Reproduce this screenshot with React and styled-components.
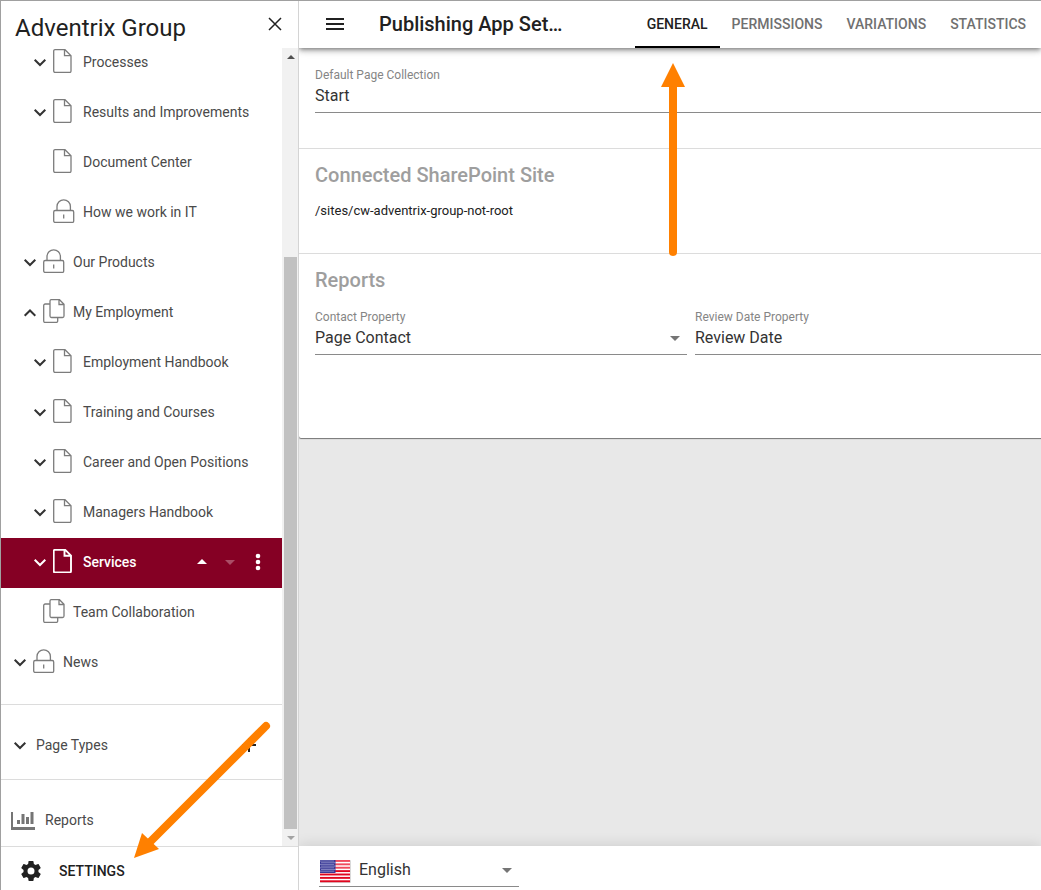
import React from 'react';
import styled, { createGlobalStyle, css } from 'styled-components';

const Global = createGlobalStyle`
  * { box-sizing: border-box; }
  body { margin: 0; font-family: Roboto, "Liberation Sans", sans-serif; color: #212121; background: #fff; }
  button, select { font: inherit; color: inherit; }
  button { border: 0; background: none; padding: 0; cursor: pointer; }
  h1, h2, h3, p, ul { margin: 0; padding: 0; }
  svg { display: block; flex: none; }
`;

const Shell = styled.div`
  position: relative;
  display: flex;
  height: 100vh;
  overflow: hidden;
  border: 1px solid #a0a0a0;
  border-width: 1px 0 0 1px;
`;

const Sidebar = styled.aside`
  display: flex;
  flex: none;
  flex-direction: column;
  width: 298px;
  border-right: 1px solid #d4d4d4;
`;

const SidebarHeader = styled.header`
  display: flex;
  flex: none;
  align-items: center;
  justify-content: space-between;
  height: 47px;
  padding: 0 11px 2px 14px;
`;

const SiteTitle = styled.h1`
  padding-top: 8px;
  font-size: 24px;
  line-height: 32px;
  font-weight: 400;
`;

const IconButton = styled.button`
  display: flex;
  align-items: center;
  justify-content: center;
  width: 24px;
  height: 24px;
  opacity: ${(p) => (p.disabled ? 0.3 : 1)};
`;

const ScrollArea = styled.div`
  display: flex;
  flex: 1;
  min-height: 0;
  overflow: hidden;
`;

const ScrollContent = styled.div`
  flex: 1;
  min-width: 0;
  overflow: hidden;
`;

const Track = styled.div`
  display: flex;
  flex: none;
  flex-direction: column;
  width: 16px;
  padding: 0 1px 0 2px;
  background: #f1f1f1;
`;

const TrackSpace = styled.div`
  flex: none;
  height: 192px;
`;

const Thumb = styled.div`
  flex: 1;
  background: #c1c1c1;
`;

const TrackEnd = styled.div`
  display: flex;
  flex: none;
  align-items: center;
  justify-content: center;
  height: 17px;
`;

const PageTree = styled.ul`
  margin-top: -10px;
  padding-bottom: 16px;
  border-bottom: 1px solid #dcdcdc;
  list-style: none;
`;

const TreeRow = styled.li`
  display: flex;
  align-items: center;
  height: 50px;
  padding: 0 12px 2px ${(p) => p.$level * 10}px;
  color: #4a4a4a;
  ${(p) =>
    p.$active &&
    css`
      background: #850024;
      color: #fff;
    `}
`;

const Expander = styled.button`
  display: flex;
  align-items: center;
  justify-content: center;
  width: 18px;
  height: 24px;
  color: ${(p) => (p.$light ? '#fff' : '#333')};
`;

const ExpanderSpace = styled.span`
  width: 18px;
`;

const PageIcon = styled.span`
  width: 34px;
  padding: 0 0 2px 4px;
  color: ${(p) => (p.$light ? '#fff' : '#7c7c7c')};
`;

const PageLink = styled.a`
  flex: 1;
  font-size: 14px;
  line-height: 20px;
  font-weight: ${(p) => (p.$strong ? 500 : 400)};
  color: inherit;
  text-decoration: none;
  white-space: nowrap;
`;

const RowActions = styled.span`
  display: flex;
  gap: 4px;
`;

const SectionRow = styled.div`
  display: flex;
  align-items: center;
  height: 75px;
  padding: 6px 21px 0 10px;
  border-bottom: 1px solid #dcdcdc;
  color: #4a4a4a;
`;

const SectionIcon = styled.span`
  width: ${(p) => p.$width}px;
  color: ${(p) => p.$color};
`;

const SettingsButton = styled.button`
  display: flex;
  flex: none;
  align-items: center;
  gap: 16px;
  height: 44px;
  padding: 4px 18px 0;
  border-top: 1px solid #dcdcdc;
  font-size: 14px;
  line-height: 20px;
  font-weight: 500;
`;

const Main = styled.main`
  display: flex;
  flex: 1;
  flex-direction: column;
  min-width: 0;
  overflow: hidden;
  background: #e8e8e8;
`;

const Toolbar = styled.header`
  position: relative;
  display: flex;
  flex: none;
  align-items: center;
  height: 47px;
  padding: 0 3px 0 24px;
  background: #fff;
  box-shadow: 0 2px 4px -1px rgba(0, 0, 0, 0.4), 0 4px 5px rgba(0, 0, 0, 0.14), 0 1px 10px rgba(0, 0, 0, 0.12);
`;

const ToolbarStart = styled.div`
  display: flex;
  flex: 1;
  align-items: center;
  gap: 32px;
  min-width: 0;
  padding: 0 16px 2px 0;
`;

const ToolbarTitle = styled.h2`
  font-size: 20px;
  line-height: 28px;
  font-weight: 500;
  white-space: nowrap;
`;

const Tabs = styled.nav`
  display: flex;
  align-self: stretch;
`;

const Tab = styled.button`
  padding: 0 12px;
  border-bottom: 2px solid ${(p) => (p.$active ? '#000' : 'transparent')};
  color: ${(p) => (p.$active ? '#212121' : '#707070')};
  font-size: 14px;
  line-height: 20px;
  font-weight: 500;
`;

const Sheet = styled.div`
  flex: none;
  width: calc(100% + 42px);
  border-radius: 2px;
  background: #fff;
  box-shadow: 0 1px 1px rgba(0, 0, 0, 0.5);
`;

const Section = styled.section`
  padding: ${(p) => p.$pad};
  & + & { border-top: 1px solid #dcdcdc; }
`;

const SectionTitle = styled.h3`
  font-size: 20px;
  line-height: 24px;
  font-weight: 500;
  color: #9e9e9e;
`;

const SitePath = styled.p`
  padding-top: 14px;
  font-size: 13px;
  line-height: 20px;
`;

const FieldRow = styled.div`
  display: grid;
  grid-template-columns: repeat(${(p) => p.$columns}, 1fr);
  gap: 8px;
`;

const ReportFields = styled(FieldRow)`
  padding-top: 17px;
`;

const Field = styled.div`
  display: flex;
  flex-direction: column;
`;

const FieldLabel = styled.label`
  font-size: 12px;
  line-height: 16px;
  color: #858585;
`;

const SelectBox = styled.div`
  position: relative;
  flex: 1;
`;

const Select = styled.select`
  display: block;
  width: 100%;
  height: 30px;
  padding: 0 24px 3px 0;
  border: 0;
  border-bottom: 1px solid #8a8a8a;
  border-radius: 0;
  outline: 0;
  appearance: none;
  background: none;
  font-size: 16px;
  line-height: 24px;
  color: #333;
`;

const SelectArrow = styled.span`
  position: absolute;
  top: 1px;
  right: 0;
  color: #757575;
  pointer-events: none;
`;

const Footer = styled.footer`
  flex: none;
  height: 44px;
  margin-top: auto;
  padding: 11px 20px 0;
  background: #fff;
  box-shadow: 0 -1px 14px rgba(0, 0, 0, 0.12);
`;

const LanguageField = styled.label`
  display: flex;
  align-items: center;
  gap: 8px;
  width: 200px;
  border-bottom: 1px solid #8a8a8a;
`;

const LanguageSelect = styled(Select)`
  height: 29px;
  border-bottom: 0;
`;

const Callout = styled.svg`
  position: absolute;
  top: ${(p) => p.$top}px;
  left: ${(p) => p.$left}px;
  pointer-events: none;
`;

const Chevron = ({ up }) => (
  <svg width="18" height="18" viewBox="0 0 18 18" fill="none" stroke="currentColor" strokeWidth="2">
    <path d={up ? 'M3.7 12.8 9 7.5l5.3 5.3' : 'M3.7 6.7 9 12l5.3-5.3'} />
  </svg>
);

const Triangle = ({ up }) => (
  <svg width="24" height="24" viewBox="0 0 24 24" fill="currentColor">
    <path d={up ? 'M7 14l5-5 5 5z' : 'M7 10l5 5 5-5z'} />
  </svg>
);

const shapes = {
  page: <path d="M2 .7h10l6 6V22a1.500 1.500 0 0 1-1.500 1.500H2A1.500 1.500 0 0 1 .7 22V2A1.300 1.300 0 0 1 2 .7ZM11.500.7v6H18" />,
  pages: (
    <path d="M8 .7h8.500L21 5.200V17a1.500 1.500 0 0 1-1.500 1.500H8.500A1.500 1.500 0 0 1 7 17V2A1.300 1.300 0 0 1 8 .7ZM16 .7v4.800h5M7 5H2.200A1.500 1.500 0 0 0 .7 6.500V22a1.500 1.500 0 0 0 1.500 1.500h11A1.500 1.500 0 0 0 14.700 22v-3.500" />
  ),
  lock: (
    <>
      <rect x=".7" y="11.500" width="20" height="12" rx="1.500" />
      <path d="M4 11.500V7.500a6.700 6.700 0 0 1 13.400 0v4M10.700 15.500v4" />
    </>
  ),
};

const TreeIcon = ({ kind, bold }) => (
  <svg width="22" height="24" viewBox="0 0 22 24" fill="none" stroke="currentColor" strokeWidth={bold ? 1.9 : 1.3}>
    {shapes[kind]}
  </svg>
);

const ChartIcon = () => (
  <svg width="24" height="20" viewBox="0 0 24 20" fill="currentColor">
    <path d="M0 2h2v15h22v3H0zM6 10h3v4H6zM10.500 4h3v10h-3zM15 7h3v7h-3zM19.500 2h3v12h-3z" />
  </svg>
);

const GearIcon = () => (
  <svg width="24" height="24" viewBox="0 0 24 24" fill="currentColor">
    <path d="M12 15.500A3.500 3.500 0 0 1 8.500 12 3.500 3.500 0 0 1 12 8.500a3.500 3.500 0 0 1 3.500 3.500 3.500 3.500 0 0 1-3.500 3.500m7.430-2.530c.04-.32.07-.64.07-.97s-.03-.66-.07-1l2.110-1.630c.19-.15.24-.42.12-.64l-2-3.460c-.12-.22-.39-.31-.61-.22l-2.490 1c-.52-.39-1.060-.73-1.690-.98l-.37-2.650A.506.506 0 0 0 14 2h-4c-.25 0-.46.18-.5.42l-.37 2.650c-.63.25-1.170.59-1.690.98l-2.490-1c-.22-.09-.49 0-.61.22l-2 3.460c-.13.22-.07.49.12.64L4.570 11c-.04.34-.07.67-.07 1s.03.65.07.97l-2.110 1.660c-.19.15-.25.42-.12.64l2 3.460c.12.22.39.3.61.22l2.490-1.010c.52.4 1.060.74 1.690.99l.37 2.650c.04.24.25.42.5.42h4c.25 0 .46-.18.5-.42l.37-2.650c.63-.26 1.170-.59 1.690-.99l2.490 1.010c.22.08.49 0 .61-.22l2-3.460c.12-.22.07-.49-.12-.64z" />
  </svg>
);

const stars = Array.from({ length: 7 }, (_, row) =>
  Array.from({ length: 7 }, (_, col) => [1 + col * 2 + (row % 2), 1 + row * 1.7]),
).flat();

const Flag = () => (
  <svg width="32" height="25" viewBox="0 0 32 25">
    <rect x="1" y="1" width="31" height="23" rx="1" fill="#000" opacity=".15" />
    <rect x="1" y="1" width="30" height="22" fill="#fff" />
    {[0, 1, 2, 3, 4, 5, 6].map((i) => (
      <rect key={i} x="1" y={1 + i * 3.385} width="30" height="1.9" fill={i < 3 ? '#f04a5c' : '#e0061f'} />
    ))}
    <rect x="1" y="1" width="15.500" height="13" fill="#3a3a96" />
    {stars.map(([x, y]) => (
      <rect key={`${x}-${y}`} x={x + 0.5} y={y + 0.5} width="1" height="1" fill="#c4c4e4" />
    ))}
  </svg>
);

const pages = [
  { name: 'Processes', level: 3, icon: 'page', toggle: 'down' },
  { name: 'Results and Improvements', level: 3, icon: 'page', toggle: 'down' },
  { name: 'Document Center', level: 3, icon: 'page' },
  { name: 'How we work in IT', level: 3, icon: 'lock' },
  { name: 'Our Products', level: 2, icon: 'lock', toggle: 'down' },
  { name: 'My Employment', level: 2, icon: 'pages', toggle: 'up' },
  { name: 'Employment Handbook', level: 3, icon: 'page', toggle: 'down' },
  { name: 'Training and Courses', level: 3, icon: 'page', toggle: 'down' },
  { name: 'Career and Open Positions', level: 3, icon: 'page', toggle: 'down' },
  { name: 'Managers Handbook', level: 3, icon: 'page', toggle: 'down' },
  { name: 'Services', level: 3, icon: 'page', toggle: 'down', active: true },
  { name: 'Team Collaboration', level: 2, icon: 'pages' },
  { name: 'News', level: 1, icon: 'lock', toggle: 'down' },
];

const TreeItem = ({ page }) => (
  <TreeRow $level={page.level} $active={page.active}>
    {page.toggle ? (
      <Expander type="button" aria-label={`Toggle ${page.name}`} $light={page.active}>
        <Chevron up={page.toggle === 'up'} />
      </Expander>
    ) : (
      <ExpanderSpace />
    )}
    <PageIcon $light={page.active}>
      <TreeIcon kind={page.icon} bold={page.active} />
    </PageIcon>
    <PageLink href="#" $strong={page.active}>{page.name}</PageLink>
    {page.active && (
      <RowActions>
        <IconButton type="button" aria-label="Move up"><Triangle up /></IconButton>
        <IconButton type="button" aria-label="Move down" disabled><Triangle /></IconButton>
        <IconButton type="button" aria-label="More">
          <svg width="24" height="24" viewBox="0 0 24 24" fill="currentColor">
            <circle cx="12" cy="6" r="2.300" /><circle cx="12" cy="12" r="2.300" /><circle cx="12" cy="18" r="2.300" />
          </svg>
        </IconButton>
      </RowActions>
    )}
  </TreeRow>
);

const SelectField = ({ id, label, value }) => (
  <Field>
    <FieldLabel htmlFor={id}>{label}</FieldLabel>
    <SelectBox>
      <Select id={id} defaultValue={value}><option>{value}</option></Select>
      <SelectArrow><Triangle /></SelectArrow>
    </SelectBox>
  </Field>
);

export default function App() {
  return (
    <>
      <Global />
      <Shell>
        <Sidebar>
          <SidebarHeader>
            <SiteTitle>Adventrix Group</SiteTitle>
            <IconButton type="button" aria-label="Close">
              <svg width="24" height="24" viewBox="0 0 24 24" fill="none" stroke="currentColor" strokeWidth="1.500">
                <path d="M6 6l12 12M18 6 6 18" />
              </svg>
            </IconButton>
          </SidebarHeader>
          <ScrollArea>
            <ScrollContent>
              <PageTree>
                {pages.map((page) => <TreeItem key={page.name} page={page} />)}
              </PageTree>
              <SectionRow>
                <SectionIcon $width={25} $color="#333"><Chevron /></SectionIcon>
                <PageLink href="#">Page Types</PageLink>
                <IconButton type="button" aria-label="Add page type">
                  <svg width="18" height="18" viewBox="0 0 18 18" fill="none" stroke="#222" strokeWidth="2">
                    <path d="M9 2v14M2 9h14" />
                  </svg>
                </IconButton>
              </SectionRow>
              <SectionRow>
                <SectionIcon $width={34} $color="#757575"><ChartIcon /></SectionIcon>
                <PageLink href="#">Reports</PageLink>
              </SectionRow>
            </ScrollContent>
            <Track aria-hidden="true">
              <TrackEnd>
                <svg width="8" height="4" viewBox="0 0 8 4"><path d="M0 4l4-4 4 4z" fill="#505050" /></svg>
              </TrackEnd>
              <TrackSpace />
              <Thumb />
              <TrackEnd>
                <svg width="8" height="4" viewBox="0 0 8 4"><path d="M0 0l4 4 4-4z" fill="#a3a3a3" /></svg>
              </TrackEnd>
            </Track>
          </ScrollArea>
          <SettingsButton type="button"><GearIcon />SETTINGS</SettingsButton>
        </Sidebar>
        <Main>
          <Toolbar>
            <ToolbarStart>
              <IconButton type="button" aria-label="Menu">
                <svg width="24" height="24" viewBox="0 0 24 24" fill="currentColor">
                  <path d="M3 6h18v2H3zm0 5h18v2H3zm0 5h18v2H3z" />
                </svg>
              </IconButton>
              <ToolbarTitle>Publishing App Set…</ToolbarTitle>
            </ToolbarStart>
            <Tabs>
              <Tab type="button" $active>GENERAL</Tab>
              <Tab type="button">PERMISSIONS</Tab>
              <Tab type="button">VARIATIONS</Tab>
              <Tab type="button">STATISTICS</Tab>
            </Tabs>
          </Toolbar>
          <Sheet>
            <Section $pad="19px 16px 35px">
              <FieldRow $columns={1}>
                <SelectField id="collection" label="Default Page Collection" value="Start" />
              </FieldRow>
            </Section>
            <Section $pad="14px 16px 32px">
              <SectionTitle>Connected SharePoint Site</SectionTitle>
              <SitePath>/sites/cw-adventrix-group-not-root</SitePath>
            </Section>
            <Section $pad="14px 16px 83px">
              <SectionTitle>Reports</SectionTitle>
              <ReportFields $columns={2}>
                <SelectField id="contact" label="Contact Property" value="Page Contact" />
                <SelectField id="review" label="Review Date Property" value="Review Date" />
              </ReportFields>
            </Section>
          </Sheet>
          <Footer>
            <LanguageField>
              <Flag />
              <SelectBox>
                <LanguageSelect aria-label="Language" defaultValue="English"><option>English</option></LanguageSelect>
                <SelectArrow><Triangle /></SelectArrow>
              </SelectBox>
            </LanguageField>
          </Footer>
        </Main>
        <Callout $top={62} $left={659} width="26" height="196" viewBox="0 0 26 196" aria-hidden="true">
          <path d="M13 22v167" stroke="#ff8000" strokeWidth="8" strokeLinecap="round" />
          <path d="M13 0l12 24H1z" fill="#ff8000" />
        </Callout>
        <Callout $top={719} $left={131} width="142" height="142" viewBox="0 0 142 142" aria-hidden="true">
          <path d="M134 6 18 122" stroke="#ff8000" strokeWidth="8" strokeLinecap="round" />
          <path d="M2 138l8-25 17 16z" fill="#ff8000" />
        </Callout>
      </Shell>
    </>
  );
}
